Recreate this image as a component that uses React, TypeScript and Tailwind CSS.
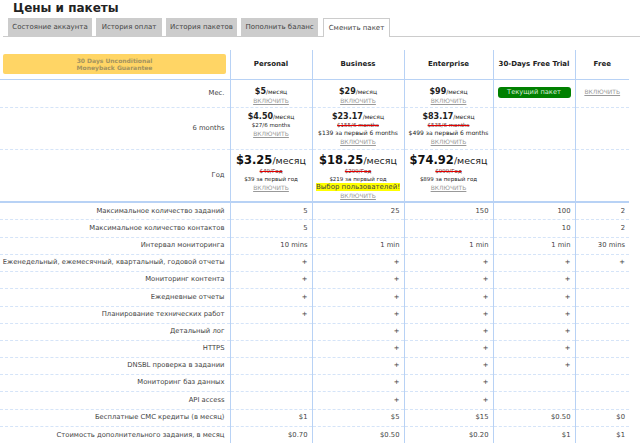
import React from 'react';

const font = "font-['DejaVu_Sans',Verdana,sans-serif]";

const tabs = [
  { label: 'Состояние аккаунта', width: 'w-[84px]' },
  { label: 'История оплат', width: 'w-[66px]' },
  { label: 'История пакетов', width: 'w-[71px]' },
  { label: 'Пополнить баланс', width: 'w-[77px]' },
];

const features: { label: string; values: string[] }[] = [
  { label: 'Максимальное количество заданий', values: ['5', '25', '150', '100', '2'] },
  { label: 'Максимальное количество контактов', values: ['5', '', '', '10', '2'] },
  { label: 'Интервал мониторинга', values: ['10 mins', '1 min', '1 min', '1 min', '30 mins'] },
  { label: 'Еженедельный, ежемесячный, квартальный, годовой отчеты', values: ['+', '+', '+', '+', '+'] },
  { label: 'Мониторинг контента', values: ['+', '+', '+', '+', ''] },
  { label: 'Ежедневные отчеты', values: ['+', '+', '+', '+', ''] },
  { label: 'Планирование технических работ', values: ['+', '+', '+', '+', ''] },
  { label: 'Детальный лог', values: ['', '+', '+', '+', ''] },
  { label: 'HTTPS', values: ['', '+', '+', '+', ''] },
  { label: 'DNSBL проверка в задании', values: ['', '+', '+', '+', ''] },
  { label: 'Мониторинг баз данных', values: ['', '+', '+', '', ''] },
  { label: 'API access', values: ['', '+', '+', '', ''] },
  { label: 'Бесплатные СМС кредиты (в месяц)', values: ['$1', '$5', '$15', '$0.50', '$0'] },
  { label: 'Стоимость дополнительного задания, в месяц', values: ['$0.70', '$0.50', '$0.20', '$1', '$1'] },
];

const Enable = () => (
  <div className="text-[6px] leading-[9px] text-[#999] underline">ВКЛЮЧИТЬ</div>
);

const Price = ({ value, small = false }: { value: string; small?: boolean }) =>
  small ? (
    <div className="whitespace-nowrap text-[8px] leading-[9px] text-[#222]">
      <span className="font-bold">{value}</span>
      <span className="text-[6px] leading-none">/месяц</span>
    </div>
  ) : (
    <div className="whitespace-nowrap text-[11.5px] leading-[14px] text-[#111]">
      <span className="font-bold">{value}</span>
      <span className="text-[9.5px] leading-none text-[#222]">/месяц</span>
    </div>
  );

const Old = ({ children }: { children: React.ReactNode }) => (
  <div className="text-[5.5px] leading-[8px] text-[#662222] line-through decoration-[#e00000]">{children}</div>
);

const Note = ({ children, wide = false }: { children: React.ReactNode; wide?: boolean }) => (
  <div className={`${wide ? 'text-[6px]' : 'text-[5.5px]'} leading-[8px] text-[#222] whitespace-nowrap`}>{children}</div>
);

const cellBase = 'border-l border-l-[#b8d2f5] text-center p-0';
const monthCell = `${cellBase} align-top pt-[7px]`;
const halfCell = `${cellBase} align-top pt-[4px]`;
const yearCell = `${cellBase} align-top pt-[3px]`;
const labelCell = 'text-right align-middle pr-[5px] text-[6.8px] text-[#444] whitespace-nowrap p-0';
const dashed = 'border-b border-dashed border-b-[#d5e4f8]';

// rows of the reference are not all the same height
const tallRows = [1, 5, 11];

export default function App() {
  return (
    <div className={`w-[640px] h-[448px] overflow-hidden bg-white ${font}`}>
      <h1 className="pl-[13px] pt-[1px] h-[18px] text-[12px] leading-[14px] font-bold text-[#222]">Цены и пакеты</h1>

      <div className="ml-[3px] flex h-[19px] border-b border-[#ccc] pl-[5px]">
        {tabs.map((tab, i) => (
          <div
            key={tab.label}
            className={`${tab.width} ${i > 0 ? 'ml-[4px]' : ''} h-[18px] bg-[#ccc] flex items-center justify-center text-[7px] text-[#444] whitespace-nowrap`}
          >
            {tab.label}
          </div>
        ))}
        <div className="ml-[5px] w-[67px] h-[19px] bg-white border border-b-0 border-[#ccc] flex items-center justify-center text-[7px] text-[#444] whitespace-nowrap">
          Сменить пакет
        </div>
      </div>

      <table className="mt-[13px] w-[629px] table-fixed border-collapse">
        <colgroup>
          <col className="w-[230px]" />
          <col className="w-[82px]" />
          <col className="w-[92px]" />
          <col className="w-[89px]" />
          <col className="w-[82px]" />
          <col className="w-[54px]" />
        </colgroup>
        <tbody>
          <tr className="h-[29px] border-b border-b-[#b8d2f5]">
            <td className="p-0 align-middle">
              <div className="ml-[3px] w-[223px] h-[20px] rounded-[2px] bg-[#ffd565] flex flex-col items-center justify-center text-[6px] leading-[7px] font-bold text-[#a3935f]">
                <div>30 Days Unconditional</div>
                <div>Moneyback Guarantee</div>
              </div>
            </td>
            {['Personal', 'Business', 'Enterprise', '30-Days Free Trial', 'Free'].map(name => (
              <td key={name} className={`${cellBase} align-middle text-[7px] font-bold text-[#222] whitespace-nowrap`}>{name}</td>
            ))}
          </tr>

          <tr className={`h-[28px] ${dashed}`}>
            <td className={labelCell}>Мес.</td>
            <td className={monthCell}><Price value="$5" small /><Enable /></td>
            <td className={monthCell}><Price value="$29" small /><Enable /></td>
            <td className={monthCell}><Price value="$99" small /><Enable /></td>
            <td className={monthCell}>
              <div className="mx-auto w-[73px] h-[11px] rounded-[3px] bg-[#008000] flex items-center justify-center text-[6.7px] text-[#d8ecd8] whitespace-nowrap">
                Текущий пакет
              </div>
            </td>
            <td className={monthCell}><Enable /></td>
          </tr>

          <tr className={`h-[42px] ${dashed}`}>
            <td className={labelCell}>6 months</td>
            <td className={halfCell}>
              <Price value="$4.50" small />
              <Note>$27/6 months</Note>
              <Enable />
            </td>
            <td className={halfCell}>
              <Price value="$23.17" small />
              <Old>$155/6 months</Old>
              <Note wide>$139 за первый 6 months</Note>
              <Enable />
            </td>
            <td className={halfCell}>
              <Price value="$83.17" small />
              <Old>$535/6 months</Old>
              <Note wide>$499 за первый 6 months</Note>
              <Enable />
            </td>
            <td className={cellBase}></td>
            <td className={cellBase}></td>
          </tr>

          <tr className="h-[53px] border-b-2 border-b-[#b8d2f5]">
            <td className={labelCell}>Год</td>
            <td className={yearCell}>
              <Price value="$3.25" />
              <Old>$49/Год</Old>
              <Note>$39 за первый год</Note>
              <Enable />
            </td>
            <td className={yearCell}>
              <Price value="$18.25" />
              <Old>$299/Год</Old>
              <Note>$219 за первый год</Note>
              <div className="mx-auto w-fit bg-[#ffff00] text-[7px] leading-[8px] text-[#444] whitespace-nowrap">Выбор пользователей!</div>
              <Enable />
            </td>
            <td className={yearCell}>
              <Price value="$74.92" />
              <Old>$999/Год</Old>
              <Note>$899 за первый год</Note>
              <Enable />
            </td>
            <td className={cellBase}></td>
            <td className={cellBase}></td>
          </tr>

          {features.map((row, rowIndex) => (
            <tr
              key={row.label}
              className={`${tallRows.includes(rowIndex) ? 'h-[18px]' : 'h-[17px]'} ${rowIndex < features.length - 1 ? dashed : ''}`}
            >
              <td className={labelCell}>{row.label}</td>
              {row.values.map((value, i) => (
                <td key={i} className={`${cellBase} !text-right pr-[4px] text-[6.8px] text-[#444] whitespace-nowrap`}>{value}</td>
              ))}
            </tr>
          ))}
        </tbody>
      </table>
    </div>
  );
}
